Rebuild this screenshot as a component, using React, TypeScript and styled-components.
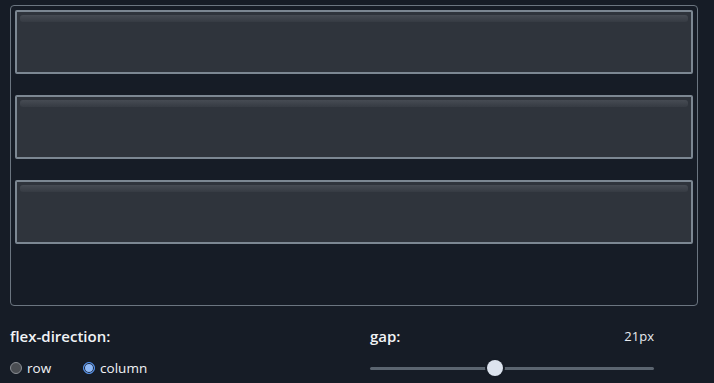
import React, { useState } from 'react';
import styled, { createGlobalStyle } from 'styled-components';

const GlobalStyle = createGlobalStyle`
  html, body {
    margin: 0;
    padding: 0;
    background: #161c26;
    font-family: "Open Sans", "Noto Sans", sans-serif;
    color: #f1f3f6;
  }
`;

const Page = styled.div`
  padding: 5px 16px 0 10px;
  width: 714px;
  box-sizing: border-box;
`;

const Stage = styled.div<{ $gap: number; $dir: string }>`
  height: 301px;
  box-sizing: border-box;
  border: 1px solid #6b7580;
  border-radius: 4px;
  padding: 4px;
  display: flex;
  flex-direction: ${p => p.$dir};
  gap: ${p => p.$gap}px;
`;

const Item = styled.div`
  height: 64px;
  box-sizing: border-box;
  border: 2px solid #7c8792;
  border-radius: 2px;
  background: #2f343c;
  padding: 3px 3px 0 3px;
`;

const Shine = styled.div`
  height: 7px;
  border-radius: 3px;
  background: linear-gradient(#464b53, #363b43);
`;

const Controls = styled.div`
  display: grid;
  grid-template-columns: 360px 284px;
  margin-top: 20px;
`;

const Group = styled.div`
  display: flex;
  flex-direction: column;
`;

const LabelRow = styled.div`
  display: flex;
  justify-content: space-between;
  align-items: center;
  height: 20px;
`;

const Label = styled.span`
  font-weight: 600;
  font-size: 15px;
`;

const Value = styled.span`
  font-size: 13px;
  color: #e8ebef;
`;

const Radios = styled.div`
  display: flex;
  gap: 32px;
  margin-top: 12px;
  height: 20px;
  align-items: center;
`;

const RadioLabel = styled.label`
  display: flex;
  align-items: center;
  gap: 5px;
  font-size: 13.5px;
  cursor: pointer;
`;

const Dot = styled.span<{ $on: boolean }>`
  width: 12px;
  height: 12px;
  border-radius: 50%;
  box-sizing: border-box;
  background: ${p => (p.$on ? '#8db8f7' : '#4a4d52')};
  border: 1px solid ${p => (p.$on ? '#4d8ff0' : '#8a8e94')};
  box-shadow: ${p => (p.$on ? 'inset 0 0 0 1px #161c26' : 'none')};
`;

const Track = styled.div`
  position: relative;
  height: 20px;
  margin-top: 12px;
  display: flex;
  align-items: center;
`;

const Rail = styled.div`
  width: 100%;
  height: 3px;
  border-radius: 2px;
  background: #5b6570;
`;

const Thumb = styled.div`
  position: absolute;
  top: 2px;
  width: 16px;
  height: 16px;
  border-radius: 50%;
  background: #dce3ee;
  box-shadow: 0 0 0 2px #161c26;
`;

export default function App() {
  const [dir, setDir] = useState('column');
  const gap = 21;
  const max = 48;
  const left = (gap / max) * (284 - 16);
  return (
    <>
      <GlobalStyle />
      <Page>
        <Stage $gap={gap} $dir={dir}>
          {[0, 1, 2].map(i => (
            <Item key={i}>
              <Shine />
            </Item>
          ))}
        </Stage>
        <Controls>
          <Group>
            <LabelRow>
              <Label>flex-direction:</Label>
            </LabelRow>
            <Radios>
              {['row', 'column'].map(d => (
                <RadioLabel key={d} onClick={() => setDir(d)}>
                  <Dot $on={dir === d} />
                  {d}
                </RadioLabel>
              ))}
            </Radios>
          </Group>
          <Group>
            <LabelRow>
              <Label>gap:</Label>
              <Value>{gap}px</Value>
            </LabelRow>
            <Track>
              <Rail />
              <Thumb style={{ left }} />
            </Track>
          </Group>
        </Controls>
      </Page>
    </>
  );
}
